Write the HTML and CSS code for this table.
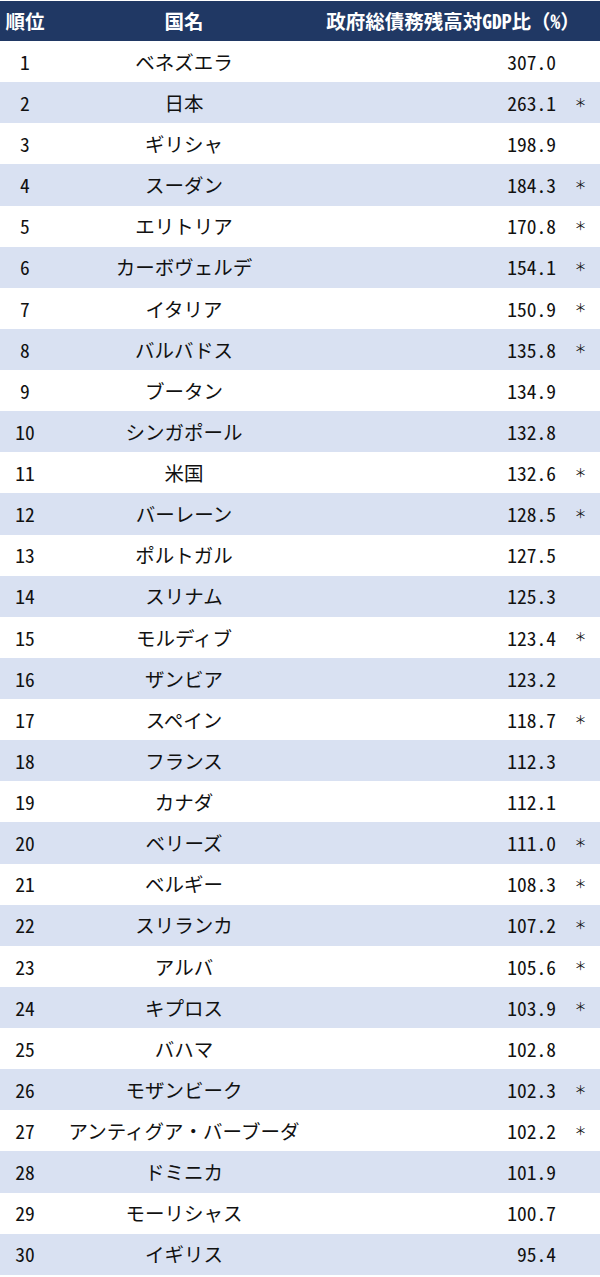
FILE: index.html
```html
<!DOCTYPE html>
<html lang="ja">
<head>
<meta charset="utf-8">
<title>政府総債務残高対GDP比ランキング</title>
<link rel="stylesheet" href="styles.css">
</head>
<body>
<div class="table">
  <div class="row head">
    <div class="rank-head">順位</div>
    <div class="name">国名</div>
    <div class="val-head">政府総債務残高対<span class="lat">GDP</span>比（<span class="lat">%</span>）</div>
  </div>
  <div class="row"><div class="rank">1</div><div class="name">ベネズエラ</div><div class="val">307.0</div><div class="star"></div></div>
  <div class="row alt"><div class="rank">2</div><div class="name">日本</div><div class="val">263.1</div><div class="star">＊</div></div>
  <div class="row"><div class="rank">3</div><div class="name">ギリシャ</div><div class="val">198.9</div><div class="star"></div></div>
  <div class="row alt"><div class="rank">4</div><div class="name">スーダン</div><div class="val">184.3</div><div class="star">＊</div></div>
  <div class="row"><div class="rank">5</div><div class="name">エリトリア</div><div class="val">170.8</div><div class="star">＊</div></div>
  <div class="row alt"><div class="rank">6</div><div class="name">カーボヴェルデ</div><div class="val">154.1</div><div class="star">＊</div></div>
  <div class="row"><div class="rank">7</div><div class="name">イタリア</div><div class="val">150.9</div><div class="star">＊</div></div>
  <div class="row alt"><div class="rank">8</div><div class="name">バルバドス</div><div class="val">135.8</div><div class="star">＊</div></div>
  <div class="row"><div class="rank">9</div><div class="name">ブータン</div><div class="val">134.9</div><div class="star"></div></div>
  <div class="row alt"><div class="rank">10</div><div class="name">シンガポール</div><div class="val">132.8</div><div class="star"></div></div>
  <div class="row"><div class="rank">11</div><div class="name">米国</div><div class="val">132.6</div><div class="star">＊</div></div>
  <div class="row alt"><div class="rank">12</div><div class="name">バーレーン</div><div class="val">128.5</div><div class="star">＊</div></div>
  <div class="row"><div class="rank">13</div><div class="name">ポルトガル</div><div class="val">127.5</div><div class="star"></div></div>
  <div class="row alt"><div class="rank">14</div><div class="name">スリナム</div><div class="val">125.3</div><div class="star"></div></div>
  <div class="row"><div class="rank">15</div><div class="name">モルディブ</div><div class="val">123.4</div><div class="star">＊</div></div>
  <div class="row alt"><div class="rank">16</div><div class="name">ザンビア</div><div class="val">123.2</div><div class="star"></div></div>
  <div class="row"><div class="rank">17</div><div class="name">スペイン</div><div class="val">118.7</div><div class="star">＊</div></div>
  <div class="row alt"><div class="rank">18</div><div class="name">フランス</div><div class="val">112.3</div><div class="star"></div></div>
  <div class="row"><div class="rank">19</div><div class="name">カナダ</div><div class="val">112.1</div><div class="star"></div></div>
  <div class="row alt"><div class="rank">20</div><div class="name">ベリーズ</div><div class="val">111.0</div><div class="star">＊</div></div>
  <div class="row"><div class="rank">21</div><div class="name">ベルギー</div><div class="val">108.3</div><div class="star">＊</div></div>
  <div class="row alt"><div class="rank">22</div><div class="name">スリランカ</div><div class="val">107.2</div><div class="star">＊</div></div>
  <div class="row"><div class="rank">23</div><div class="name">アルバ</div><div class="val">105.6</div><div class="star">＊</div></div>
  <div class="row alt"><div class="rank">24</div><div class="name">キプロス</div><div class="val">103.9</div><div class="star">＊</div></div>
  <div class="row"><div class="rank">25</div><div class="name">バハマ</div><div class="val">102.8</div><div class="star"></div></div>
  <div class="row alt"><div class="rank">26</div><div class="name">モザンビーク</div><div class="val">102.3</div><div class="star">＊</div></div>
  <div class="row"><div class="rank">27</div><div class="name">アンティグア・バーブーダ</div><div class="val">102.2</div><div class="star">＊</div></div>
  <div class="row alt"><div class="rank">28</div><div class="name">ドミニカ</div><div class="val">101.9</div><div class="star"></div></div>
  <div class="row"><div class="rank">29</div><div class="name">モーリシャス</div><div class="val">100.7</div><div class="star"></div></div>
  <div class="row alt"><div class="rank">30</div><div class="name">イギリス</div><div class="val">95.4</div><div class="star"></div></div>
</div>
</body>
</html>
```

FILE: styles.css
```css
html, body {
  margin: 0;
  padding: 0;
  background: #ffffff;
}

body {
  font-family: "Noto Sans CJK JP", "Noto Sans", sans-serif;
  color: #111111;
  font-size: 19.5px;
  padding-top: 1px;
}

.table {
  width: 600px;
}

.row {
  display: grid;
  grid-template-columns: 50px 268px 242px 40px;
  align-items: center;
  height: 41.13px;
  line-height: 1;
}

.row.alt {
  background: #d9e1f2;
}

.row.head {
  height: 40px;
  background: #203864;
  color: #ffffff;
  font-weight: bold;
  grid-template-columns: 50px 268px 282px;
}

.rank,
.rank-head,
.name {
  text-align: center;
}

.rank,
.val,
.lat {
  font-feature-settings: "hwid";
}

.val {
  text-align: right;
  padding-right: 4px;
}

.val-head {
  text-align: center;
  padding-right: 12px;
  white-space: nowrap;
}

.star {
  text-align: center;
  font-size: 12px;
  padding-left: 1px;
}
```
